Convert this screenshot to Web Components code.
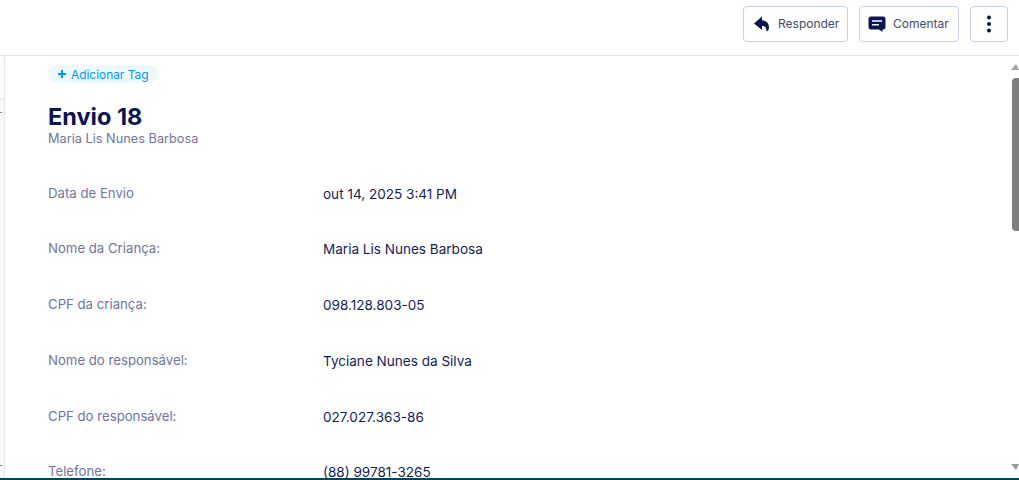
<!DOCTYPE html>
<html><head><meta charset="utf-8"><style>
html,body{margin:0;height:100%;overflow:hidden;background:#fff}
body{font-family:Inter,"Liberation Sans",sans-serif;color:#0a1551}
</style></head><body>
<template id="t-btn"><style>
:host{display:inline-flex;align-items:center;box-sizing:border-box;height:36px;border:1px solid #c8ceed;border-radius:4px;background:#fff;padding:0 0 0 var(--pl,9px);gap:7px;font-size:12px;color:#434a6e;flex:none;width:var(--w,100px);white-space:nowrap}
::slotted(span){position:relative;top:-1px}
::slotted(svg){display:block}
</style><slot></slot></template>
<template id="t-top"><style>
:host{display:flex;justify-content:flex-end;align-items:flex-start;gap:11px;box-sizing:border-box;height:56px;flex:none;padding:6px 11px 0 0;border-bottom:1px solid #e3e5ee;background:#fff}
</style><slot></slot></template>
<template id="t-row"><style>
:host{display:grid;grid-template-columns:275px 1fr;height:55.8px;font-size:13.2px}
.l{color:#70759c}.v{color:#141d58;padding-top:1px;font-size:13.55px}
</style><div class="l"><slot name="l"></slot></div><div class="v"><slot name="v"></slot></div></template>
<template id="t-tag"><style>
:host{display:inline-flex;align-items:center;height:18px;border-radius:9px;background:#edf8ff;color:#0099ff;font-size:11.9px;padding:0 9.5px 0 9px;gap:4px}
</style><svg width="10" height="10" viewBox="0 0 10 10"><path d="M5 1v8M1 5h8" stroke="#0099ff" stroke-width="2" fill="none"/></svg><slot></slot></template>
<template id="t-scroll"><style>
:host{display:flex;flex-direction:column;align-items:flex-end;width:8px;flex:none;background:#fff}
.a{width:0;height:0;border-left:5px solid transparent;border-right:3px solid transparent}
.up{border-bottom:6px solid #a3a3a3;margin-top:8px}
.th{width:7px;height:153px;background:#7f7f7f;border-radius:4px 0 0 4px;margin-top:8px}
.sp{flex:1}
.dn{border-top:6px solid #999;margin-bottom:8px}
</style><div class="a up"></div><div class="th"></div><div class="sp"></div><div class="a dn"></div></template>
<template id="t-gutter"><style>
:host{display:block;width:5px;flex:none;box-sizing:border-box;border-right:1px solid #e3e5ee;position:relative}
.band{position:absolute;left:0;right:0;top:42px;bottom:0;background:#f8f8fa;border-top:1px solid #e8e9f0}
.tick{position:absolute;left:0;width:2px;height:1px;background:#888}
</style><div class="band"></div><div class="tick" style="top:56px"></div><div class="tick" style="top:409px"></div></template>
<template id="t-main"><style>
:host{display:flex;flex:1;min-height:0}
.c{flex:1;min-width:0;padding:7px 0 0 43px;overflow:hidden}
h1{margin:20px 0 0;font-size:23.5px;line-height:28px;font-weight:700;color:#0a1551}
.sub{font-size:12.75px;line-height:16px;color:#70759c;margin-top:0}
.rows{margin-top:37.5px}
</style><slot name="gutter"></slot><div class="c"><slot name="tag"></slot><h1><slot name="title"></slot></h1><div class="sub"><slot name="sub"></slot></div><div class="rows"><slot></slot></div></div><slot name="bar"></slot></template>
<template id="t-app"><style>
:host{display:flex;flex-direction:column;height:480px;box-sizing:border-box;border-bottom:2px solid #0b4450;overflow:hidden}
</style><slot></slot></template>

<app-shell>
<top-bar>
<action-btn style="--w:105px;--pl:9px"><svg width="18" height="18" viewBox="0 0 18 18"><path d="M9 1.500 1 8.500 9 15v-4c2 0 3.500.5 4 2.500l.7 3c1.300-.5 2.300-2 2.300-4C16 8 13 5.500 9 5.500z" fill="#0a1551"/></svg><span>Responder</span></action-btn>
<action-btn style="--w:100px;--pl:8px"><svg width="18" height="18" viewBox="0 0 18 18"><path d="M3 1.500h12A2.500 2.500 0 0 1 17.500 4v8a2.500 2.500 0 0 1-2.500 2.500h-.5V17l-3.500-2.500H3A2.500 2.500 0 0 1 .5 12V4A2.500 2.500 0 0 1 3 1.500z" fill="#0a1551"/><path d="M4 6h10M4 9.800h7" stroke="#fff" stroke-width="1.600"/></svg><span>Comentar</span></action-btn>
<action-btn style="--w:38px;--pl:9px"><svg width="18" height="18" viewBox="0 0 18 18"><circle cx="9" cy="2.500" r="2" fill="#0a1551"/><circle cx="9" cy="9" r="2" fill="#0a1551"/><circle cx="9" cy="15.500" r="2" fill="#0a1551"/></svg></action-btn>
</top-bar>
<main-pane>
<side-gutter slot="gutter"></side-gutter>
<tag-chip slot="tag">Adicionar Tag</tag-chip>
<span slot="title">Envio 18</span>
<span slot="sub">Maria Lis Nunes Barbosa</span>
<data-row><span slot="l">Data de Envio</span><span slot="v">out 14, 2025 3:41 PM</span></data-row>
<data-row><span slot="l">Nome da Criança:</span><span slot="v">Maria Lis Nunes Barbosa</span></data-row>
<data-row><span slot="l">CPF da criança:</span><span slot="v">098.128.803-05</span></data-row>
<data-row><span slot="l">Nome do responsável:</span><span slot="v">Tyciane Nunes da Silva</span></data-row>
<data-row><span slot="l">CPF do responsável:</span><span slot="v">027.027.363-86</span></data-row>
<data-row><span slot="l">Telefone:</span><span slot="v">(88) 99781-3265</span></data-row>
<scroll-bar slot="bar"></scroll-bar>
</main-pane>
</app-shell>
<script>
for (const [name,id] of [['app-shell','t-app'],['top-bar','t-top'],['action-btn','t-btn'],['main-pane','t-main'],['side-gutter','t-gutter'],['tag-chip','t-tag'],['data-row','t-row'],['scroll-bar','t-scroll']]) {
  customElements.define(name, class extends HTMLElement {
    constructor(){super();this.attachShadow({mode:'open'}).appendChild(document.getElementById(id).content.cloneNode(true));}
  });
}
</script>
</body></html>
